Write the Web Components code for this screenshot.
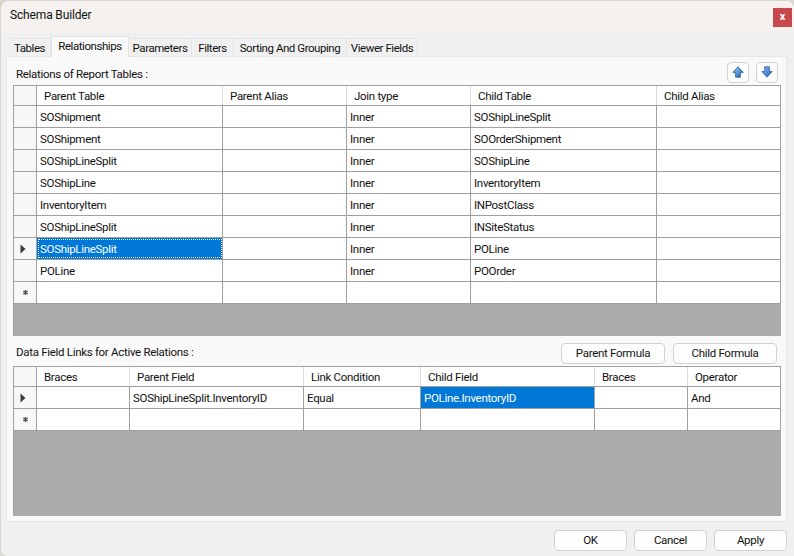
<!DOCTYPE html>
<html>
<head>
<meta charset="utf-8">
<style>
html, body { margin: 0; padding: 0; width: 794px; height: 556px; overflow: hidden; background: #d8d6cf; }
</style>
</head>
<body>
<template id="dialog-tpl">
    <style>
    :host {
        display: flex;
        flex-direction: column;
        width: 793px;
        height: 555px;
        margin: 1px 0 0 1px;
        box-sizing: border-box;
        background: #f0f0f0;
        border-radius: 8px 8px 0 6px;
        font: 11.5px Roboto, "Liberation Sans", Arial, sans-serif;
        letter-spacing: -0.3px;
        color: #111;
    }
    .title {
        height: 30px;
        flex: none;
        display: flex;
        justify-content: space-between;
        background: #f4f1ee;
        border-radius: 8px 8px 0 0;
        padding: 7px 0 0 9px;
        box-sizing: border-box;
        font-size: 12px;
        letter-spacing: -0.15px;
    }
    .close {
        width: 19px;
        height: 19px;
        background: #c8484f;
        color: #fff;
        font-weight: bold;
        font-size: 11px;
        line-height: 17px;
        text-align: center;
        margin: 0 2px 0 0;
    }
    .body { flex: 1; display: flex; flex-direction: column; padding: 5px 7px 0 5px; min-height: 0; }
    .footer { flex: none; height: 34px; box-sizing: border-box; display: flex; justify-content: flex-end; gap: 7px; padding: 8px 7px 0 0; }
    </style>
    <div class="title"><span>Schema Builder</span><span class="close">x</span></div>
    <div class="body"><slot></slot></div>
    <div class="footer"><slot name="footer"></slot></div>
</template>

<template id="tabs-tpl">
    <style>
    :host { display: flex; padding-left: 3px; height: 20px; flex: none; align-items: flex-start; letter-spacing: -0.45px; }
    span {
        display: block;
        box-sizing: border-box;
        height: 18px;
        margin-top: 2px;
        line-height: 19px;
        text-align: center;
        background: #f0f0f0;
        border: 1px solid #e4e4e4;
        border-bottom: 0;
        border-left: 0;
        white-space: nowrap;
    }
    span.on {
        height: 21px;
        margin-top: 0;
        line-height: 18px;
        background: #f9f9f9;
        border-left: 1px solid #e4e4e4;
        position: relative;
        z-index: 1;
    }
    </style>
    <span style="width:42px">Tables</span>
    <span class="on" style="width:78px">Relationships</span>
    <span style="width:63px">Parameters</span>
    <span style="width:42px">Filters</span>
    <span style="width:113px">Sorting And Grouping</span>
    <span style="width:71px">Viewer Fields</span>
</template>

<template id="panel-tpl">
    <style>
    :host {
        display: flex;
        flex-direction: column;
        flex: 1;
        min-height: 0;
        background: #f9f9f9;
        border: 1px solid #e6e6e6;
        padding: 0 5px 4px 6px;
    }
    </style>
    <slot></slot>
</template>

<template id="section-head-tpl">
    <style>
    :host { display: flex; justify-content: space-between; align-items: flex-end; flex: none; box-sizing: border-box; padding-bottom: 2px; }
    .lbl { padding-left: 3px; line-height: 14px; padding-bottom: var(--lbl-drop, 2px); }
    .tools { display: flex; gap: var(--tools-gap, 7px); padding-right: var(--tools-right, 3px); }
    </style>
    <span class="lbl"><slot></slot></span>
    <span class="tools"><slot name="tools"></slot></span>
</template>

<template id="btn-tpl">
    <style>
    :host {
        display: inline-flex;
        align-items: center;
        justify-content: center;
        box-sizing: border-box;
        height: 21px;
        padding-bottom: 1px;
        background: #fdfdfd;
        border: 1px solid #d2d2d2;
        border-radius: 4px;
    }
    </style>
    <slot></slot>
</template>

<template id="grid-tpl">
    <style>
    :host { display: block; flex: none; background: #ababab; border: 1px solid #a0a0a0; border-right: 0; border-bottom: 0; }
    .row { display: flex; height: 22px; box-sizing: border-box; border-bottom: 1px solid #a0a0a0; }
    .row.head { height: 20px; }
    .c {
        box-sizing: border-box;
        border-right: 1px solid #a0a0a0;
        background: #fff;
        padding: 0 3px;
        line-height: 23px;
        white-space: nowrap;
        overflow: hidden;
        flex: none;
    }
    .head .c { background: #fff; border-right-color: #dcdcdc; padding-left: 7px; line-height: 20px; }
    .head .c:last-child { border-right-color: #a0a0a0; }
    .hdr { background: #f7f7f7; padding: 0; display: flex; align-items: center; justify-content: center; }
    .head .hdr { background: #f7f7f7; border-right-color: #a0a0a0; }
    .sel { background: #0078d7; color: #fff; }
    .focus { outline: 1px dotted #fff; outline-offset: -2px; }
    .fill { background: #ababab; }
    </style>
    <div id="rows"></div>
    <div class="fill" id="fill"></div>
</template>

<script>
class SchemaDialog extends HTMLElement {
    constructor() {
        super()
        this.attachShadow({ mode: 'open' })
        this.shadowRoot.appendChild(document.getElementById('dialog-tpl').content.cloneNode(true))
    }
}

class TabStrip extends HTMLElement {
    constructor() {
        super()
        this.attachShadow({ mode: 'open' })
        this.shadowRoot.appendChild(document.getElementById('tabs-tpl').content.cloneNode(true))
    }
}

class TabPanel extends HTMLElement {
    constructor() {
        super()
        this.attachShadow({ mode: 'open' })
        this.shadowRoot.appendChild(document.getElementById('panel-tpl').content.cloneNode(true))
    }
}

class SectionHead extends HTMLElement {
    constructor() {
        super()
        this.attachShadow({ mode: 'open' })
        this.shadowRoot.appendChild(document.getElementById('section-head-tpl').content.cloneNode(true))
    }
}

class DlgButton extends HTMLElement {
    constructor() {
        super()
        this.attachShadow({ mode: 'open' })
        this.shadowRoot.appendChild(document.getElementById('btn-tpl').content.cloneNode(true))
    }
}

const ARROW = '<svg width="8" height="10" viewBox="0 0 8 10" style="margin-right:5px"><path d="M1.5 .5l5 4.5-5 4.5z" fill="#3c3c3c"/></svg>'
const STAR = '<svg width="7" height="7" viewBox="0 0 7 7"><path d="M3.5 1v5M1.3 2.2l4.4 2.6M5.7 2.2L1.3 4.8" stroke="#555" stroke-width="1.4"/></svg>'

class DataGrid extends HTMLElement {
    constructor() {
        super()
        this.attachShadow({ mode: 'open' })
        this.shadowRoot.appendChild(document.getElementById('grid-tpl').content.cloneNode(true))
    }

    // widths: column widths, rows: arrays of text, mark: row index of the arrow
    setData({ widths, headers, rows, mark, selected, focus, fill }) {
        const box = this.shadowRoot.getElementById('rows')
        const cell = (w, text, cls) => `<div class="c ${cls || ''}" style="width:${w}px">${text}</div>`
        let html = '<div class="row head">' + cell(23, '', 'hdr')
        headers.forEach((h, i) => html += cell(widths[i], h))
        html += '</div>'
        rows.concat([widths.map(() => '')]).forEach((r, y) => {
            const isNew = y == rows.length
            html += '<div class="row">' + cell(23, y == mark ? ARROW : isNew ? STAR : '', 'hdr')
            r.forEach((t, x) => {
                let cls = ''
                if (selected && selected[0] == y && selected[1] == x) cls = 'sel'
                if (cls && focus) cls += ' focus'
                html += cell(widths[x], t, cls)
            })
            html += '</div>'
        })
        box.innerHTML = html
        this.shadowRoot.getElementById('fill').style.height = fill + 'px'
    }
}

customElements.define('schema-dialog', SchemaDialog)
customElements.define('tab-strip', TabStrip)
customElements.define('tab-panel', TabPanel)
customElements.define('section-head', SectionHead)
customElements.define('dlg-button', DlgButton)
customElements.define('data-grid', DataGrid)
</script>

<schema-dialog>
    <tab-strip></tab-strip>
    <tab-panel>
        <section-head style="height:28px">
            Relations of Report Tables :
            <dlg-button slot="tools" style="width:22px"><svg width="12" height="12" viewBox="0 0 12 12"><defs><linearGradient id="up-fill" x1="0" y1="0" x2="1" y2="1"><stop offset="0" stop-color="#9cd0f5"/><stop offset="1" stop-color="#1766b8"/></linearGradient></defs><path d="M6 .8L11.2 6.4H8.4V11.2H3.6V6.4H.8z" fill="url(#up-fill)" stroke="#1f5a94" stroke-width=".8"/></svg></dlg-button>
            <dlg-button slot="tools" style="width:22px"><svg width="12" height="12" viewBox="0 0 12 12"><defs><linearGradient id="down-fill" x1="0" y1="0" x2="1" y2="1"><stop offset="0" stop-color="#8fb8ee"/><stop offset="1" stop-color="#2264c4"/></linearGradient></defs><path d="M6 11.2L11.2 5.6H8.4V.8H3.6V5.6H.8z" fill="url(#down-fill)" stroke="#33619e" stroke-width=".8"/></svg></dlg-button>
        </section-head>
        <data-grid id="top"></data-grid>
        <section-head style="height:30px;--lbl-drop:5px;--tools-gap:8px;--tools-right:4px">
            Data Field Links for Active Relations :
            <dlg-button slot="tools" style="width:104px">Parent Formula</dlg-button>
            <dlg-button slot="tools" style="width:104px">Child Formula</dlg-button>
        </section-head>
        <data-grid id="bottom"></data-grid>
    </tab-panel>
    <dlg-button slot="footer" style="width:73px">OK</dlg-button>
    <dlg-button slot="footer" style="width:73px">Cancel</dlg-button>
    <dlg-button slot="footer" style="width:73px">Apply</dlg-button>
</schema-dialog>

<script>
document.getElementById('top').setData({
    widths: [186, 124, 124, 186, 124],
    headers: ['Parent Table', 'Parent Alias', 'Join type', 'Child Table', 'Child Alias'],
    rows: [
        ['SOShipment', '', 'Inner', 'SOShipLineSplit', ''],
        ['SOShipment', '', 'Inner', 'SOOrderShipment', ''],
        ['SOShipLineSplit', '', 'Inner', 'SOShipLine', ''],
        ['SOShipLine', '', 'Inner', 'InventoryItem', ''],
        ['InventoryItem', '', 'Inner', 'INPostClass', ''],
        ['SOShipLineSplit', '', 'Inner', 'INSiteStatus', ''],
        ['SOShipLineSplit', '', 'Inner', 'POLine', ''],
        ['POLine', '', 'Inner', 'POOrder', ''],
    ],
    mark: 6,
    selected: [6, 0],
    focus: true,
    fill: 32,
})
document.getElementById('bottom').setData({
    widths: [93, 174, 117, 174, 93, 93],
    headers: ['Braces', 'Parent Field', 'Link Condition', 'Child Field', 'Braces', 'Operator'],
    rows: [['', 'SOShipLineSplit.InventoryID', 'Equal', 'POLine.InventoryID', '', 'And']],
    mark: 0,
    selected: [0, 3],
    focus: false,
    fill: 85,
})
</script>
</body>
</html>
